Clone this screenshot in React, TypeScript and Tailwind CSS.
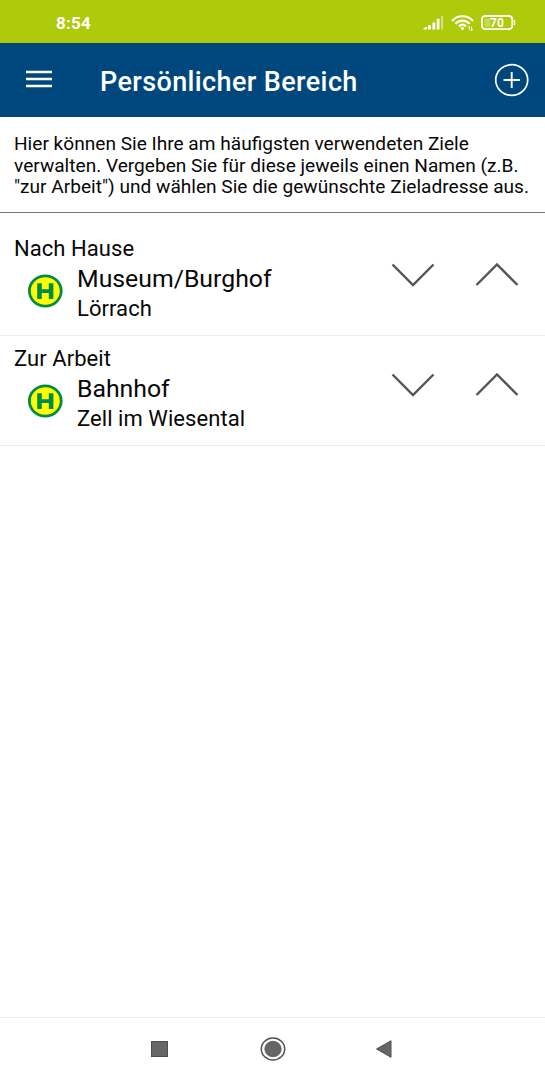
const destinations = [
  { label: 'Nach Hause', stop: 'Museum/Burghof', city: 'Lörrach', height: 'h-[123px] pt-[22px]' },
  { label: 'Zur Arbeit', stop: 'Bahnhof', city: 'Zell im Wiesental', height: 'h-[110px] pt-[9px]' },
];

function StatusBar() {
  return (
    <div className="flex h-[42.5px] shrink-0 items-start bg-[#aecb0b] pl-[56px] text-white">
      <span className="mt-[13px] w-[367px] text-[17px] leading-5 font-bold tracking-[0.2px]">8:54</span>
      <svg className="mt-[14px]" width="94" height="18" viewBox="0 0 94 18">
        <g fill="#fff">
          <path d="M0.5 15.5V14L4 12.8V15.5Z" />
          <rect x="5" y="11" width="2.8" height="4.5" />
          <rect x="9.400" y="8.500" width="2.800" height="7" />
          <rect x="13.700" y="4.800" width="2.800" height="10.700" />
          <rect x="18" y="2" width="2.200" height="13.500" opacity="0.45" />
        </g>
        <g fill="none" stroke="#fff" strokeWidth="2.1">
          <path d="M29 7C34.500 0.600 44.500 0.600 50 7" />
          <path d="M32.500 9.800C36 5.500 43 5.500 46.500 9.800" />
          <path d="M36 12.500C38 10 41 10 43 12.500" />
        </g>
        <circle cx="39.500" cy="14.300" r="1.600" fill="#fff" />
        <path d="M46.400 16.500V12.200L45.200 14M48.600 12.500V16.800L49.800 15" fill="none" stroke="#fff" strokeWidth="1" opacity="0.8" />
        <rect x="59" y="2" width="30.300" height="13.200" rx="3.300" fill="none" stroke="#fff" strokeWidth="1.800" />
        <rect x="61.500" y="4.400" width="6" height="8.400" rx="1" fill="#fff" opacity="0.3" />
        <path d="M91.500 6V11" stroke="#fff" strokeWidth="1.500" />
        <text x="74" y="13" textAnchor="middle" fill="#fff" fontSize="12" fontWeight="700">70</text>
      </svg>
    </div>
  );
}

function Header() {
  return (
    <header className="flex h-[74px] shrink-0 items-center bg-[#00477e] pr-[16px] pl-[25px] text-white">
      <button aria-label="Menü" className="-mt-[1px]">
        <svg width="28" height="20" viewBox="0 0 28 20">
          <path d="M1 3H27M1 10H27M1 17H27" stroke="#fff" strokeWidth="2.500" />
        </svg>
      </button>
      <h1 className="mt-[5px] ml-[47px] flex-1 text-[27px] leading-8 font-medium tracking-[0.380px] whitespace-nowrap">
        Persönlicher Bereich
      </h1>
      <button aria-label="Hinzufügen">
        <svg width="35" height="34" viewBox="0 0 35 34">
          <ellipse cx="17.700" cy="17" rx="16" ry="15.300" fill="none" stroke="#fff" strokeWidth="1.700" />
          <path d="M9.500 17H26M17.700 9V25" stroke="#fff" strokeWidth="1.900" />
        </svg>
      </button>
    </header>
  );
}

function StopSign() {
  return (
    <svg width="35" height="34" viewBox="0 0 35 34" aria-label="Haltestelle">
      <ellipse cx="17.300" cy="17" rx="15.900" ry="15.100" fill="#ffff00" stroke="#008c46" strokeWidth="2.800" />
      <path d="M9.200 9.200H13.800V15.300H20.800V9.200H25.400V25H20.800V19H13.800V25H9.200Z" fill="#008c46" />
    </svg>
  );
}

function Chevron({ d }: { d: string }) {
  return (
    <button>
      <svg width="44" height="26" viewBox="0 0 44 26">
        <path d={d} fill="none" stroke="#555" strokeWidth="2.400" />
      </svg>
    </button>
  );
}

export default function App() {
  return (
    <div className="flex h-[1080px] w-[545px] flex-col overflow-hidden bg-white font-['Roboto',sans-serif] text-[#080808]">
      <StatusBar />
      <Header />
      <p className="h-[96px] shrink-0 border-b-[1.500px] border-[#777] pt-[16.400px] pl-[14px] text-[19.100px] leading-[21.700px] whitespace-nowrap">
        Hier können Sie Ihre am häufigsten verwendeten Ziele
        <br />
        verwalten. Vergeben Sie für diese jeweils einen Namen (z.B.
        <br />
        "zur Arbeit") und wählen Sie die gewünschte Zieladresse aus.
      </p>
      <main className="flex-1">
        {destinations.map((item) => (
          <section key={item.label} className={`flex justify-between border-b border-[#ededed] pr-[26px] pl-[14px] ${item.height}`}>
            <div>
              <h2 className="text-[22px] leading-[27px] tracking-[0.060px]">{item.label}</h2>
              <div className="flex pl-[14px]">
                <div className="mt-[12px] mr-[14px] shrink-0">
                  <StopSign />
                </div>
                <div className="whitespace-nowrap">
                  <div className="text-[24.800px] leading-[33px]">{item.stop}</div>
                  <div className="text-[22px] leading-[28px] tracking-[0.060px]">{item.city}</div>
                </div>
              </div>
            </div>
            <div className="flex items-start gap-[40px] pt-[26px]">
              <Chevron d="M1.500 3.500L22 24L42.500 3.500" />
              <Chevron d="M1.500 24L22 3.500L42.500 24" />
            </div>
          </section>
        ))}
      </main>
      <nav className="flex h-[63px] shrink-0 items-center border-t border-[#f0f0f0] pl-[151px]">
        <svg width="17" height="16" viewBox="0 0 17 16">
          <rect x="0.500" y="0.500" width="16" height="15" fill="#666" stroke="#505050" />
        </svg>
        <svg className="ml-[92px]" width="26" height="26" viewBox="0 0 26 26">
          <ellipse cx="13" cy="13" rx="11.700" ry="11" fill="none" stroke="#505050" strokeWidth="1.500" />
          <ellipse cx="13" cy="13" rx="8.200" ry="7.800" fill="#666" stroke="#505050" strokeWidth="0.700" />
        </svg>
        <svg className="ml-[90px]" width="16" height="18" viewBox="0 0 16 18">
          <path d="M0.500 9L15 0.700V17.300Z" fill="#666" stroke="#505050" />
        </svg>
      </nav>
    </div>
  );
}
